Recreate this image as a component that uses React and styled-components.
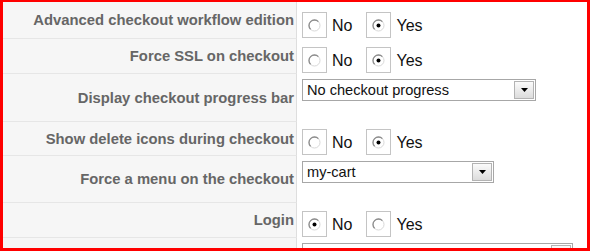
import React from "react"
import styled, { createGlobalStyle } from "styled-components"

const GlobalStyle = createGlobalStyle`
  html, body {
    margin: 0;
    padding: 0;
    background: #fff;
  }
  body {
    font-family: "Liberation Sans", Arial, sans-serif;
  }
`

const Frame = styled.div`
  width: 590px;
  height: 251px;
  box-sizing: border-box;
  border: 3px solid #ff0000;
  border-top-width: 2px;
  overflow: hidden;
  background: #fff;
`

const Table = styled.div`
  display: grid;
  grid-template-columns: 294px 1fr;
`

const Label = styled.div`
  height: ${props => props.h}px;
  box-sizing: border-box;
  display: flex;
  align-items: center;
  justify-content: flex-end;
  padding-right: 2px;
  background: #f6f6f6;
  border-right: 1px solid #dedede;
  border-bottom: 1px solid #e6e6e6;
  font-size: 14.8px;
  font-weight: bold;
  color: #666;
  white-space: nowrap;
`

const Value = styled.div`
  height: ${props => props.h}px;
  box-sizing: border-box;
  display: flex;
  align-items: ${props => (props.kind === "radio" ? "flex-end" : "flex-start")};
  padding: ${props => (props.kind === "radio" ? "0 0 1px 5px" : "5px 0 0 5px")};
`

const Option = styled.label`
  display: flex;
  align-items: flex-end;
  margin-right: 14px;
`

const RadioBox = styled.span`
  width: 25px;
  height: 26px;
  box-sizing: border-box;
  border: 1px solid #c4c4c4;
  background: #fff;
  display: flex;
  align-items: center;
  justify-content: center;
`

const OptionText = styled.span`
  font-size: 16px;
  line-height: 18px;
  padding: 0 0 3px 5px;
  color: #111;
`

const Select = styled.div`
  width: ${props => props.w}px;
  height: 22px;
  box-sizing: border-box;
  border: 1px solid #a7a7a7;
  background: #fff;
  display: flex;
  align-items: center;
  justify-content: space-between;
  padding: 0 1px 0 4px;
  font-size: 14.6px;
  color: #111;
  white-space: nowrap;
`

const ArrowButton = styled.span`
  width: 20px;
  height: 18px;
  box-sizing: border-box;
  border: 1px solid #b3b3b3;
  background: linear-gradient(#fbfbfb, #dcdcdc);
  display: flex;
  align-items: center;
  justify-content: center;
`

const Radio = ({ checked }) => (
  <RadioBox>
    <svg width="13" height="13" viewBox="0 0 13 13">
      <circle cx="6.5" cy="6.5" r="5.5" fill="#fff" stroke="#d8d8d8" strokeWidth="1" />
      <path d="M10.4 2.6 A5.5 5.5 0 0 0 2.6 10.4" fill="none" stroke="#8c8c8c" strokeWidth="1.3" />
      {checked && <circle cx="6.5" cy="6.5" r="2" fill="#000" />}
    </svg>
  </RadioBox>
)

const YesNo = ({ value }) => (
  <>
    <Option>
      <Radio checked={value === "no"} />
      <OptionText>No</OptionText>
    </Option>
    <Option>
      <Radio checked={value === "yes"} />
      <OptionText>Yes</OptionText>
    </Option>
  </>
)

const Dropdown = ({ width, text }) => (
  <Select w={width}>
    <span>{text}</span>
    <ArrowButton>
      <svg width="7" height="4" viewBox="0 0 7 4">
        <path d="M0 0 H7 L3.5 4 Z" fill="#000" />
      </svg>
    </ArrowButton>
  </Select>
)

const rows = [
  { label: "Advanced checkout workflow edition", h: 37, kind: "radio", value: "yes" },
  { label: "Force SSL on checkout", h: 35, kind: "radio", value: "yes" },
  { label: "Display checkout progress bar", h: 48, kind: "select", text: "No checkout progress", width: 234 },
  { label: "Show delete icons during checkout", h: 34, kind: "radio", value: "yes" },
  { label: "Force a menu on the checkout", h: 47, kind: "select", text: "my-cart", width: 192 },
  { label: "Login", h: 35, kind: "radio", value: "no" },
  { label: "", h: 60, kind: "select", text: "No redirection", width: 271 },
]

const App = () => {
  return (
    <Frame>
      <GlobalStyle />
      <Table>
        {rows.map((row, i) => (
          <React.Fragment key={i}>
            <Label h={row.h}>{row.label}</Label>
            <Value h={row.h} kind={row.kind}>
              {row.kind === "radio" ? (
                <YesNo value={row.value} />
              ) : (
                <Dropdown width={row.width} text={row.text} />
              )}
            </Value>
          </React.Fragment>
        ))}
      </Table>
    </Frame>
  )
}

export default App
